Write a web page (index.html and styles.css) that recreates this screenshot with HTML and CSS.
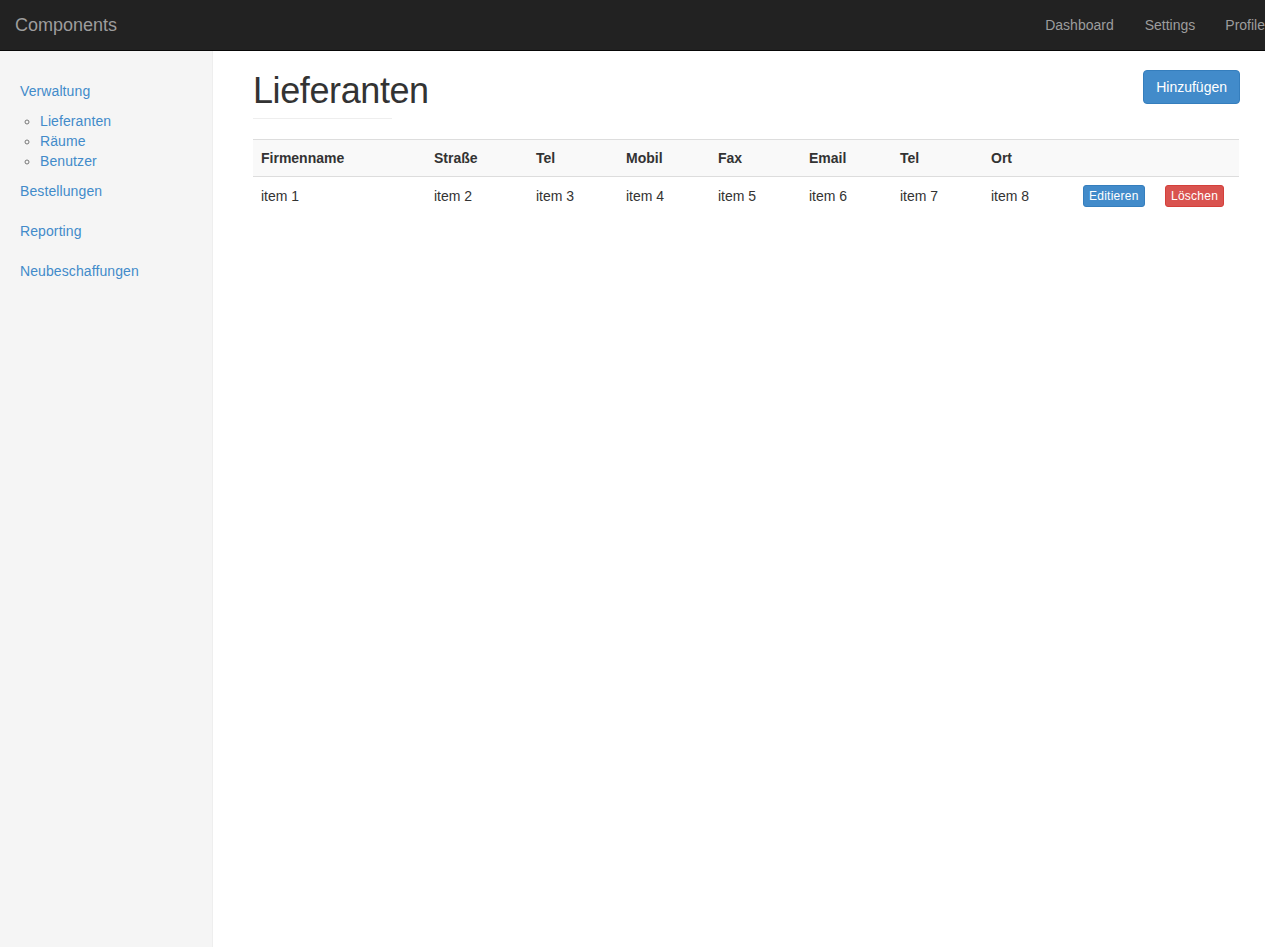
FILE: index.html
```html
<!DOCTYPE html>
<html lang="de">
<head>
<meta charset="utf-8">
<title>Components</title>
<link rel="stylesheet" href="styles.css">
</head>
<body>
<header class="navbar">
  <a class="brand" href="#">Components</a>
  <ul class="nav-right">
    <li><a href="#">Dashboard</a></li>
    <li><a href="#">Settings</a></li>
    <li><a href="#">Profile</a></li>
  </ul>
</header>
<div class="layout">
  <aside class="sidebar">
    <ul class="nav-sidebar">
      <li>
        <a href="#">Verwaltung</a>
        <ul class="subnav">
          <li><a href="#">Lieferanten</a></li>
          <li><a href="#">Räume</a></li>
          <li><a href="#">Benutzer</a></li>
        </ul>
      </li>
      <li><a href="#">Bestellungen</a></li>
      <li><a href="#">Reporting</a></li>
      <li><a href="#">Neubeschaffungen</a></li>
    </ul>
  </aside>
  <main class="main">
    <div class="page-head">
      <div class="title-block">
        <h1>Lieferanten</h1>
        <div class="rule"></div>
      </div>
      <button class="btn btn-primary">Hinzufügen</button>
    </div>
    <table class="table">
      <colgroup>
        <col class="c-firma"><col class="c-strasse"><col class="c-tel"><col class="c-mobil"><col class="c-fax"><col class="c-email"><col class="c-tel2"><col class="c-ort"><col class="c-act"><col class="c-act">
      </colgroup>
      <thead>
        <tr>
          <th>Firmenname</th><th>Straße</th><th>Tel</th><th>Mobil</th><th>Fax</th><th>Email</th><th>Tel</th><th>Ort</th><th></th><th></th>
        </tr>
      </thead>
      <tbody>
        <tr>
          <td>item 1</td><td>item 2</td><td>item 3</td><td>item 4</td><td>item 5</td><td>item 6</td><td>item 7</td><td>item 8</td>
          <td><button class="btn btn-xs btn-primary">Editieren</button></td>
          <td><button class="btn btn-xs btn-danger">Löschen</button></td>
        </tr>
      </tbody>
    </table>
  </main>
</div>
</body>
</html>
```

FILE: styles.css
```css
* { box-sizing: border-box; }

html, body {
  margin: 0;
  padding: 0;
}

body {
  font-family: "Liberation Sans", Arial, Helvetica, sans-serif;
  font-size: 14px;
  line-height: 20px;
  color: #333;
  background: #fff;
  overflow-x: hidden;
}

a {
  color: #428bca;
  text-decoration: none;
}

/* Navbar */
.navbar {
  display: flex;
  align-items: stretch;
  height: 51px;
  background: #222;
  border-bottom: 1px solid #080808;
  padding: 0 0 0 15px;
  overflow: hidden;
}

.brand {
  font-size: 18px;
  line-height: 20px;
  padding: 15px 0;
  color: #9d9d9d;
}

.nav-right {
  display: flex;
  list-style: none;
  margin: 0 -15px 0 auto;
  padding: 0;
  flex-shrink: 0;
}

.nav-right a {
  display: block;
  padding: 15px;
  line-height: 20px;
  color: #9d9d9d;
}

.nav-right li:first-child a {
  padding-right: 16px;
}

/* Layout */
.layout {
  display: flex;
  min-height: calc(100vh - 51px);
}

.sidebar {
  width: 213px;
  flex-shrink: 0;
  background: #f5f5f5;
  border-right: 1px solid #eee;
  padding-top: 20px;
}

.nav-sidebar {
  list-style: none;
  margin: 0;
  padding: 0;
}

.nav-sidebar > li > a {
  display: block;
  padding: 10px 20px;
}

.subnav {
  list-style: circle;
  margin: 0;
  padding-left: 40px;
  color: #777;
}

.nav-sidebar a {
  letter-spacing: 0.1px;
}

/* Main */
.main {
  flex: 1;
  padding: 20px 26px 20px 40px;
}

.page-head {
  display: flex;
  justify-content: space-between;
  align-items: flex-start;
}

.title-block h1 {
  margin: 0 0 7px;
  font-size: 36px;
  line-height: 40px;
  font-weight: 500;
  letter-spacing: -0.4px;
  color: #333;
}

.rule {
  width: 139px;
  height: 1px;
  background: #eee;
}

.btn {
  font-family: inherit;
  font-size: 14px;
  line-height: 20px;
  padding: 6px 12px;
  border: 1px solid transparent;
  border-radius: 4px;
  color: #fff;
  cursor: pointer;
}

.page-head .btn {
  margin-top: -1px;
  margin-right: -1px;
}

.btn-primary {
  background: #428bca;
  border-color: #357ebd;
}

.btn-danger {
  background: #d9534f;
  border-color: #d43f3a;
}

.btn-xs {
  font-size: 12px;
  line-height: 18px;
  padding: 1px 5px;
  border-radius: 3px;
  letter-spacing: 0.25px;
}

/* Table */
.table {
  width: 986px;
  margin-top: 20px;
  border-collapse: separate;
  border-spacing: 0;
  table-layout: fixed;
}

.c-firma { width: 173px; }
.c-strasse { width: 102px; }
.c-tel { width: 90px; }
.c-mobil { width: 92px; }
.c-fax { width: 91px; }
.c-email { width: 91px; }
.c-tel2 { width: 91px; }
.c-ort { width: 92px; }
.c-act { width: 82px; }

.table th,
.table td {
  padding: 8px;
  text-align: left;
  vertical-align: middle;
  line-height: 20px;
}

.table th {
  font-weight: bold;
  background: #f9f9f9;
  border-top: 1px solid #ddd;
  border-bottom: 1px solid #ddd;
}

.table td {
  white-space: nowrap;
}
```
